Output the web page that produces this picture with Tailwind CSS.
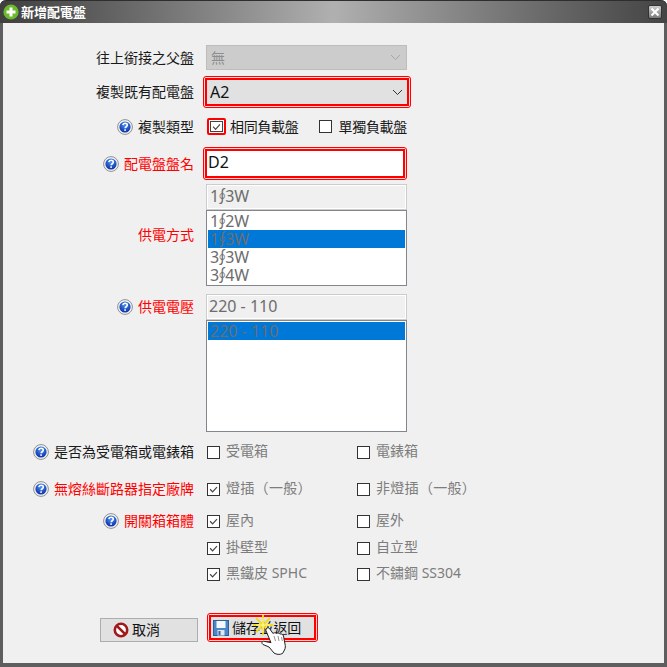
<!DOCTYPE html>
<html lang="zh-Hant">
<head>
<meta charset="utf-8">
<script src="https://cdn.jsdelivr.net/npm/@tailwindcss/browser@4"></script>
</head>
<body class="m-0 bg-white font-['Noto_Sans','Noto_Sans_CJK_TC',sans-serif]">
<svg class="absolute w-0 h-0" width="0" height="0">
  <defs>
    <radialGradient id="hb" cx="50%" cy="30%" r="70%"><stop offset="0" stop-color="#4a96f5"/><stop offset="1" stop-color="#0a2ca5"/></radialGradient>
    <symbol id="help" viewBox="0 0 16 16">
      <circle cx="8" cy="8" r="7.400" fill="#f4f4f4" stroke="#8f8f8f" stroke-width="1"/>
      <circle cx="8" cy="8" r="5.600" fill="url(#hb)"/>
      <path d="M5.800 6.200c.2-1.300 1.100-1.900 2.300-1.900 1.300 0 2.200.7 2.200 1.800 0 1.700-2.100 1.600-2.100 3.200" fill="none" stroke="#fff" stroke-width="1.600"/>
      <rect x="7.300" y="10.300" width="1.600" height="1.600" fill="#fff"/>
    </symbol>
    <symbol id="chk" viewBox="0 0 13 13">
      <path d="M2.500 6.200 5.400 9.300 10.600 3.600" fill="none" stroke="#444" stroke-width="1.400"/>
    </symbol>
  </defs>
</svg>

<div class="relative w-[667px] h-[667px] overflow-hidden">
  <div class="flex flex-col w-full h-full rounded-t-[6px] border-x-[3px] border-b-[4px] border-x-[#5e5e5e] border-b-[#5e5e5e] bg-[#f0f0f0]">
    <!-- title bar -->
    <div class="-mx-[3px] flex items-center h-[23px] shrink-0 rounded-t-[6px] border-t border-[#2e2e2e] bg-gradient-to-r from-[#3f3f3f] via-[#b0b0b0] to-[#444444] pl-[3px] pr-[5px]">
      <svg width="16" height="16" viewBox="0 0 16 16" class="shrink-0">
        <circle cx="8" cy="8" r="7.600" fill="#6cb92a"/>
        <path d="M8 3.500v9M3.500 8h9" stroke="#fff" stroke-width="3"/>
      </svg>
      <span class="ml-[2px] text-[13px] leading-none font-bold text-white">新增配電盤</span>
      <div class="ml-auto flex items-center justify-center w-[14px] h-[14px] rounded-[2px] border border-[#333] bg-gradient-to-b from-[#cfcfcf] to-[#7a7a7a]">
        <svg width="10" height="10" viewBox="0 0 10 10"><path d="M1.500 1.500 8.500 8.500M8.500 1.500 1.500 8.500" stroke="#fff" stroke-width="2"/></svg>
      </div>
    </div>

    <!-- form -->
    <div class="flex flex-col text-[14px] leading-none text-[#1a1a1a]">
      <!-- parent panel -->
      <div class="flex items-center mt-[22px] -ml-[3px]">
        <div class="w-[194px] text-right">往上銜接之父盤</div>
        <div class="ml-[12px] w-[201px] h-[25px] border border-[#bdbdbd] bg-[#cccccc] flex items-center justify-between pl-[4px] pr-[5px] text-[#8d8d8d]">
          <span>無</span>
          <svg width="11" height="7" viewBox="0 0 11 7"><path d="M1 1l4.500 4.500L10 1" fill="none" stroke="#a6a6a6" stroke-width="1"/></svg>
        </div>
      </div>

      <!-- copy panel -->
      <div class="flex items-center mt-[6px] -ml-[3px]">
        <div class="w-[194px] text-right">複製既有配電盤</div>
        <div class="ml-[9px] w-[208px] h-[32px] rounded-[3px] border border-[#ff0000] bg-[#ffd9d9] p-px">
          <div class="w-full h-full border-2 border-[#ff0000] bg-[#e1e1e1] flex items-center justify-between pl-[3px] pr-[4px] text-[16px] text-[#111]">
            <span>A2</span>
            <svg width="11" height="7" viewBox="0 0 11 7"><path d="M1 1l4.500 4.500L10 1" fill="none" stroke="#333" stroke-width="1"/></svg>
          </div>
        </div>
      </div>

      <!-- copy type -->
      <div class="flex items-center mt-[10px] -ml-[3px] h-[17px]">
        <div class="w-[194px] flex items-center justify-end gap-[5px]">
          <svg width="16" height="16"><use href="#help"/></svg><span>複製類型</span>
        </div>
        <div class="ml-[13px] w-[19px] h-[17px] rounded-[2px] border-2 border-[#ff0000] flex items-center justify-center bg-white">
          <div class="w-[13px] h-[11px] border border-[#444] overflow-hidden"><svg width="11" height="9" viewBox="0 1 13 10" class="block"><use href="#chk" width="13" height="13"/></svg></div>
        </div>
        <span class="ml-[4px] tracking-[-0.3px]">相同負載盤</span>
        <div class="ml-[20px] w-[13px] h-[13px] border border-[#333] bg-white"></div>
        <span class="ml-[7px] tracking-[-0.3px]">單獨負載盤</span>
      </div>

      <!-- name -->
      <div class="flex items-center mt-[12px] -ml-[3px]">
        <div class="w-[194px] flex items-center justify-end gap-[5px] text-[#ff0000]">
          <svg width="16" height="16"><use href="#help"/></svg><span>配電盤盤名</span>
        </div>
        <div class="ml-[9px] w-[204px] h-[33px] rounded-[3px] border border-[#ff0000] bg-[#ffd9d9] p-px">
          <div class="w-full h-full border-2 border-[#ff0000] bg-white flex items-center pl-[1px] pb-[4px] text-[16px] text-[#111]">D2</div>
        </div>
      </div>

      <!-- supply mode -->
      <div class="flex items-center mt-[4px] -ml-[3px]">
        <div class="w-[194px] text-right text-[#ff0000]">供電方式</div>
        <div class="ml-[12px] w-[201px] flex flex-col text-[16px] text-[#6d6d6d]">
          <div class="h-[26px] border border-[#cccccc] outline outline-1 -outline-offset-2 outline-white bg-[#f0f0f0] flex items-center pl-[3px] pb-[2px]"><span>1<span class="-mx-[5px] inline-block">∮</span>3W</span></div>
          <div class="h-[76px] border border-[#82878c] bg-white p-px">
            <div class="h-[18px] flex items-center pl-[2px]"><span>1<span class="-mx-[5px] inline-block">∮</span>2W</span></div>
            <div class="h-[18px] flex items-center pl-[2px] bg-[#0078d7]"><span>1<span class="-mx-[5px] inline-block">∮</span>3W</span></div>
            <div class="h-[18px] flex items-center pl-[2px]"><span>3<span class="-mx-[5px] inline-block">∮</span>3W</span></div>
            <div class="h-[18px] flex items-center pl-[2px]"><span>3<span class="-mx-[5px] inline-block">∮</span>4W</span></div>
          </div>
        </div>
      </div>

      <!-- voltage -->
      <div class="flex items-start mt-[8px] -ml-[3px]">
        <div class="w-[194px] h-[26px] flex items-center justify-end gap-[5px] text-[#ff0000]">
          <svg width="16" height="16"><use href="#help"/></svg><span>供電電壓</span>
        </div>
        <div class="ml-[12px] w-[201px] flex flex-col text-[16px] text-[#6d6d6d]">
          <div class="h-[26px] border border-[#cccccc] outline outline-1 -outline-offset-2 outline-white bg-[#f0f0f0] flex items-center pl-[2px] pb-[2px]">220 - 110</div>
          <div class="h-[112px] border border-[#82878c] bg-white p-px">
            <div class="h-[18px] flex items-center pl-[2px] bg-[#0078d7]">220 - 110</div>
          </div>
        </div>
      </div>

      <!-- meter box -->
      <div class="flex items-center mt-[10px] -ml-[3px] h-[20px]">
        <div class="w-[194px] flex items-center justify-end gap-[5px]">
          <svg width="16" height="16"><use href="#help"/></svg><span>是否為受電箱或電錶箱</span>
        </div>
        <div class="ml-[13px] w-[150px] flex items-center gap-[6px] text-[#7d7d7d]"><div class="w-[13px] h-[13px] border border-[#333] bg-white"></div><span class="-mt-[2px]">受電箱</span></div>
        <div class="flex items-center gap-[6px] text-[#7d7d7d]"><div class="w-[13px] h-[13px] border border-[#333] bg-white"></div><span class="-mt-[2px]">電錶箱</span></div>
      </div>

      <!-- breaker -->
      <div class="flex items-center mt-[17px] -ml-[3px] h-[20px]">
        <div class="w-[194px] flex items-center justify-end gap-[5px] text-[#ff0000]">
          <svg width="16" height="16"><use href="#help"/></svg><span>無熔絲斷路器指定廠牌</span>
        </div>
        <div class="ml-[13px] w-[150px] flex items-center gap-[6px] text-[#7d7d7d]"><div class="w-[13px] h-[13px] border border-[#333] bg-white overflow-hidden"><svg width="11" height="11" class="block"><use href="#chk"/></svg></div><span class="-mt-[2px] tracking-[0.3px]">燈插（一般）</span></div>
        <div class="flex items-center gap-[6px] text-[#7d7d7d]"><div class="w-[13px] h-[13px] border border-[#333] bg-white"></div><span class="-mt-[2px] tracking-[0.3px]">非燈插（一般）</span></div>
      </div>

      <!-- cabinet 1 -->
      <div class="flex items-center mt-[12px] -ml-[3px] h-[20px]">
        <div class="w-[194px] flex items-center justify-end gap-[5px] text-[#ff0000]">
          <svg width="16" height="16"><use href="#help"/></svg><span>開關箱箱體</span>
        </div>
        <div class="ml-[13px] w-[150px] flex items-center gap-[6px] text-[#7d7d7d]"><div class="w-[13px] h-[13px] border border-[#333] bg-white overflow-hidden"><svg width="11" height="11" class="block"><use href="#chk"/></svg></div><span class="-mt-[2px]">屋內</span></div>
        <div class="flex items-center gap-[6px] text-[#7d7d7d]"><div class="w-[13px] h-[13px] border border-[#333] bg-white"></div><span class="-mt-[2px]">屋外</span></div>
      </div>
      <div class="flex items-center mt-[7px] -ml-[3px] h-[20px]">
        <div class="w-[194px]"></div>
        <div class="ml-[13px] w-[150px] flex items-center gap-[6px] text-[#7d7d7d]"><div class="w-[13px] h-[13px] border border-[#333] bg-white overflow-hidden"><svg width="11" height="11" class="block"><use href="#chk"/></svg></div><span class="-mt-[2px]">掛壁型</span></div>
        <div class="flex items-center gap-[6px] text-[#7d7d7d]"><div class="w-[13px] h-[13px] border border-[#333] bg-white"></div><span class="-mt-[2px]">自立型</span></div>
      </div>
      <div class="flex items-center mt-[6px] -ml-[3px] h-[20px]">
        <div class="w-[194px]"></div>
        <div class="ml-[13px] w-[150px] flex items-center gap-[6px] text-[#7d7d7d]"><div class="w-[13px] h-[13px] border border-[#333] bg-white overflow-hidden"><svg width="11" height="11" class="block"><use href="#chk"/></svg></div><span class="-mt-[2px]">黑鐵皮 SPHC</span></div>
        <div class="flex items-center gap-[6px] text-[#7d7d7d]"><div class="w-[13px] h-[13px] border border-[#333] bg-white"></div><span class="-mt-[2px]">不鏽鋼 SS304</span></div>
      </div>

      <!-- buttons -->
      <div class="flex items-end mt-[29px] ml-[97px] gap-[9px]">
        <div class="w-[98px] h-[24px] border border-[#adadad] bg-[#e1e1e1] flex items-center pl-[12px] gap-[3px] text-[#111]">
          <svg width="16" height="16" viewBox="0 0 16 16"><circle cx="8" cy="8" r="6.200" fill="#fff" stroke="#a01818" stroke-width="2.600"/><path d="M3.800 3.800 12.200 12.200" stroke="#a01818" stroke-width="2.600"/></svg>
          <span>取消</span>
        </div>
        <div class="w-[111px] h-[29px] rounded-[3px] border border-[#ff0000] bg-[#ffd9d9] p-px">
          <div class="w-full h-full border-2 border-[#ff0000] bg-[#e1e1e1] flex items-center pl-[2px] gap-[3px] text-[#111]">
            <svg width="16" height="16" viewBox="0 0 16 16">
              <rect x="0.500" y="0.500" width="15" height="15" fill="#4d86c6" stroke="#2e5f9c"/>
              <rect x="3.500" y="1" width="9" height="7" fill="#f4f7fb"/>
              <rect x="4.500" y="10" width="7" height="5.500" fill="#dfe6ef"/>
              <rect x="5.500" y="11" width="2" height="4" fill="#35679f"/>
            </svg>
            <span class="tracking-[-0.2px]">儲存並返回</span>
          </div>
        </div>
      </div>
    </div>
  </div>

  <!-- click sparkle and pointer lying over the save button -->
  <svg class="absolute left-[252px] top-[614px]" width="38" height="42" viewBox="0 0 38 42">
    <path d="M11 1v20M1 11h20M4 4l14 14M18 4 4 18" stroke="#f2dc12" stroke-width="1.800"/>
    <path d="M11 4v14M4 11h14" stroke="#fff8b0" stroke-width="1"/>
    <path d="M14 15c1-1.500 2.500-1.500 3.500-.5l3.500 5c1-1 2.500-1 3.500 0 1-.8 2.500-.5 3.500.5 1.500-.5 3 .5 3.500 2l1.500 8c.5 2 .5 4-.5 6l-2 3.500c-3 1.500-6 1-8.500-.5L17 33l-6-2.500c-1.500-1-1.500-3 .5-3.300l7.500 1.500L14.500 18c-.5-1-.8-2-.5-3Z" fill="#fff" stroke="#222" stroke-width="1"/>
    <path d="M22 22l1.500 5M26 22l1 5M29.500 23l.8 4" fill="none" stroke="#777" stroke-width="0.800"/>
  </svg>
</div>
</body>
</html>
